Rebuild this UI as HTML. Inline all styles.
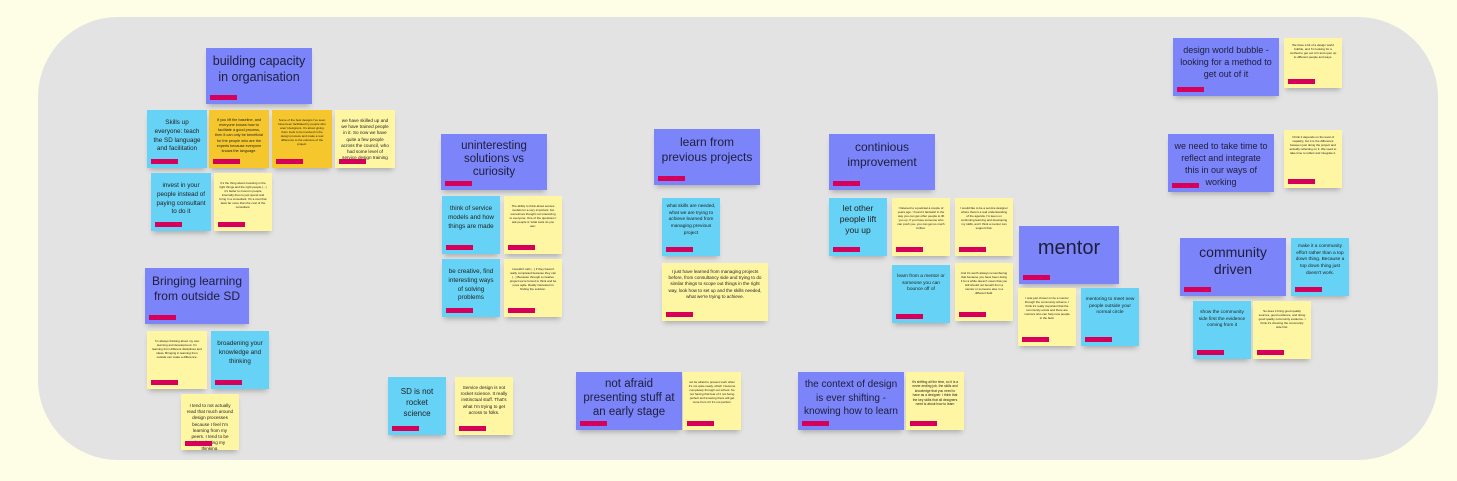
<!DOCTYPE html>
<html><head><meta charset="utf-8"><style>
body{margin:0;width:1457px;height:481px;background:#fefee6;overflow:hidden;position:relative;font-family:"Liberation Sans",sans-serif}
.panel{position:absolute;left:38px;top:17px;width:1400px;height:443px;background:#e3e3e3;border-radius:80px}
.n{position:absolute;box-sizing:border-box;padding:5px 3px 10px;text-align:center;color:#222;box-shadow:0 4px 5px -2px rgba(0,0,0,.25);display:flex;align-items:flex-start;justify-content:center;line-height:1.35;overflow:hidden}
.n::after{content:"";position:absolute;left:4px;bottom:4px;width:27px;height:5px;background:#d6005a}
.p{background:#7b84f8;font-size:12px;line-height:1.25;color:#1e1e3a;padding:6px 5px 12px}
.b{background:#66d2f6;font-size:6.3px;padding:9px 4px 12px;line-height:1.4}
.y{background:#fff6a3;font-size:3.4px;padding:8px 5px 12px}
.o{background:#f5c72d;font-size:3.4px;padding:8px 5px 12px}
.y.t{font-size:4.6px}
</style></head><body>
<div class="panel"></div>

<div class="n p" style="left:206px;top:48px;width:106px;height:56px;font-size:12.5px">building capacity in organisation</div>
<div class="n b" style="left:147px;top:110px;width:60px;height:58px">Skills up everyone: teach the SD language and facilitation</div>
<div class="n o" style="left:209px;top:110px;width:60px;height:58px;font-size:3.8px">If you lift the baseline, and everyone knows how to facilitate a good process, then it can only be beneficial for the people who are the experts because everyone knows the language.</div>
<div class="n o" style="left:272px;top:110px;width:60px;height:58px;font-size:3px">Some of the best designs I've seen have been facilitated by people who aren't designers. It's about giving them tools to be involved in the design process and make a real difference to the outcome of the project.</div>
<div class="n y t" style="left:335px;top:110px;width:60px;height:58px">we have skilled up and we have trained people in it. So now we have quite a few people across the council, who had some level of service design training</div>
<div class="n b" style="left:151px;top:173px;width:60px;height:58px">invest in your people instead of paying consultant to do it</div>
<div class="n y" style="left:214px;top:173px;width:58px;height:58px;font-size:3px">It's the thing about investing in the right things and the right people (...) it's better to invest in people internally than to just spend and bring in a consultant. It's a cost that lasts far more than the cost of the consultant.</div>

<div class="n p" style="left:145px;top:268px;width:104px;height:56px">Bringing learning from outside SD</div>
<div class="n y" style="left:147px;top:331px;width:60px;height:58px;font-size:3px">I'm always thinking about my own learning and development. I'm learning from different disciplines and ideas. Bringing in learning from outside can make a difference.</div>
<div class="n b" style="left:211px;top:331px;width:58px;height:58px">broadening your knowledge and thinking</div>
<div class="n y t" style="left:181px;top:394px;width:58px;height:56px;padding-top:9px">I tend to not actually read that much around design processes because I feel I'm learning from my peers. I tend to be broadening my thinking.</div>

<div class="n b" style="left:388px;top:377px;width:58px;height:58px;font-size:8px">SD is not rocket science</div>
<div class="n y t" style="left:455px;top:377px;width:58px;height:58px">Service design is not rocket science. It really instinctual stuff. That's what I'm trying to get across to folks.</div>

<div class="n p" style="left:441px;top:134px;width:106px;height:56px;font-size:11.5px;line-height:1.15">uninteresting solutions vs curiosity</div>
<div class="n b" style="left:442px;top:196px;width:58px;height:58px">think of service models and how things are made</div>
<div class="n y" style="left:504px;top:196px;width:58px;height:58px;font-size:3px">The ability to think about service models for a very important, but sometimes thought not interesting to everyone. One of the questions I ask people is 'what tools do you use'.</div>
<div class="n b" style="left:442px;top:259px;width:58px;height:58px">be creative, find interesting ways of solving problems</div>
<div class="n y" style="left:504px;top:259px;width:58px;height:58px;font-size:3px">I wouldn't call (...) if they haven't really completed because they can (...) Because through a creative project we're forced to think and be more agile. Really interested in finding the solution.</div>

<div class="n p" style="left:654px;top:129px;width:106px;height:56px">learn from previous projects</div>
<div class="n b" style="left:662px;top:198px;width:58px;height:58px;font-size:4.8px;padding-top:6px">what skills are needed, what we are trying to achieve learned from managing previous project</div>
<div class="n y t" style="left:662px;top:263px;width:106px;height:58px;padding-top:6px">I just have learned from managing projects before, from consultancy side and trying to do similar things to scope out things in the right way, look how to set up and the skills needed, what we're trying to achieve.</div>

<div class="n p" style="left:576px;top:372px;width:106px;height:58px;font-size:11.5px;line-height:1.2">not afraid presenting stuff at an early stage</div>
<div class="n y" style="left:683px;top:372px;width:58px;height:58px;font-size:3px">not be afraid to present work when it's not quite ready, which I become completely through out school. So not having that fear of it not being perfect and knowing there will get more from it if it's not perfect.</div>

<div class="n p" style="left:829px;top:134px;width:106px;height:56px">continious improvement</div>
<div class="n b" style="left:829px;top:198px;width:58px;height:58px;font-size:8.5px;padding-top:5px;line-height:1.3">let other people lift you up</div>
<div class="n y" style="left:892px;top:198px;width:58px;height:58px;font-size:3px">I listened to a podcast a couple of years ago. I found it fantastic in the way you can get other people to lift you up. If you have someone who can push you, you can get so much further.</div>
<div class="n y" style="left:955px;top:198px;width:58px;height:58px;font-size:3px">I would like to be a service designer where there's a real understanding of the agenda. I'm keen on continuing learning and developing my skills, and I think a mentor can support that.</div>
<div class="n b" style="left:892px;top:265px;width:58px;height:58px;font-size:4.8px">learn from a mentor or someone you can bounce off of</div>
<div class="n y" style="left:955px;top:263px;width:58px;height:58px;font-size:3px">And it's worth always remembering that because you have been doing it for a while doesn't mean that you still should not benefit from a mentor or someone else in a different field.</div>

<div class="n p" style="left:1019px;top:226px;width:100px;height:58px;font-size:20px;padding-top:10px">mentor</div>
<div class="n y" style="left:1018px;top:288px;width:58px;height:58px;font-size:3px">I was just chosen to be a mentor through the community scheme. I think it's really important that the community exists and there are mentors who can help new people in the field.</div>
<div class="n b" style="left:1081px;top:288px;width:58px;height:58px;font-size:4.8px">mentoring to meet new people outside your normal circle</div>

<div class="n p" style="left:798px;top:372px;width:106px;height:58px;font-size:10px;line-height:1.35">the context of design is ever shifting - knowing how to learn</div>
<div class="n y" style="left:906px;top:372px;width:58px;height:58px;font-size:3.3px">It's shifting all the time, so it is a never-ending job, the skills and knowledge that you need to have as a designer. I think that the key skills that all designers need is about how to learn</div>

<div class="n p" style="left:1173px;top:38px;width:106px;height:58px;font-size:9px;line-height:1.35">design world bubble - looking for a method to get out of it</div>
<div class="n y" style="left:1284px;top:38px;width:58px;height:50px;font-size:3px;padding-top:5px">We have a bit of a design world bubble, and I'm looking for a method to get out of it and open up to different people and ways.</div>
<div class="n p" style="left:1168px;top:134px;width:106px;height:58px;font-size:9px;line-height:1.35">we need to take time to reflect and integrate this in our ways of working</div>
<div class="n y" style="left:1284px;top:130px;width:58px;height:58px;font-size:3px;padding-top:5px">I think it depends on the level of capacity, but it is the difference between just doing the project and actually reflecting on it. We need to take time to reflect and integrate it.</div>

<div class="n p" style="left:1180px;top:238px;width:106px;height:58px;font-size:14px;line-height:1.2">community driven</div>
<div class="n b" style="left:1291px;top:238px;width:58px;height:58px;font-size:4.8px;padding-top:6px">make it a community effort rather than a top down thing. Because a top down thing just doesn't work.</div>
<div class="n b" style="left:1193px;top:301px;width:58px;height:58px;font-size:4.8px">show the community side first the evidence coming from it</div>
<div class="n y" style="left:1253px;top:301px;width:58px;height:58px;font-size:3px">So does it bring good quality sources, good evidence, and doing good quality community evidence. I think it's showing the community side first.</div>
</body></html>
